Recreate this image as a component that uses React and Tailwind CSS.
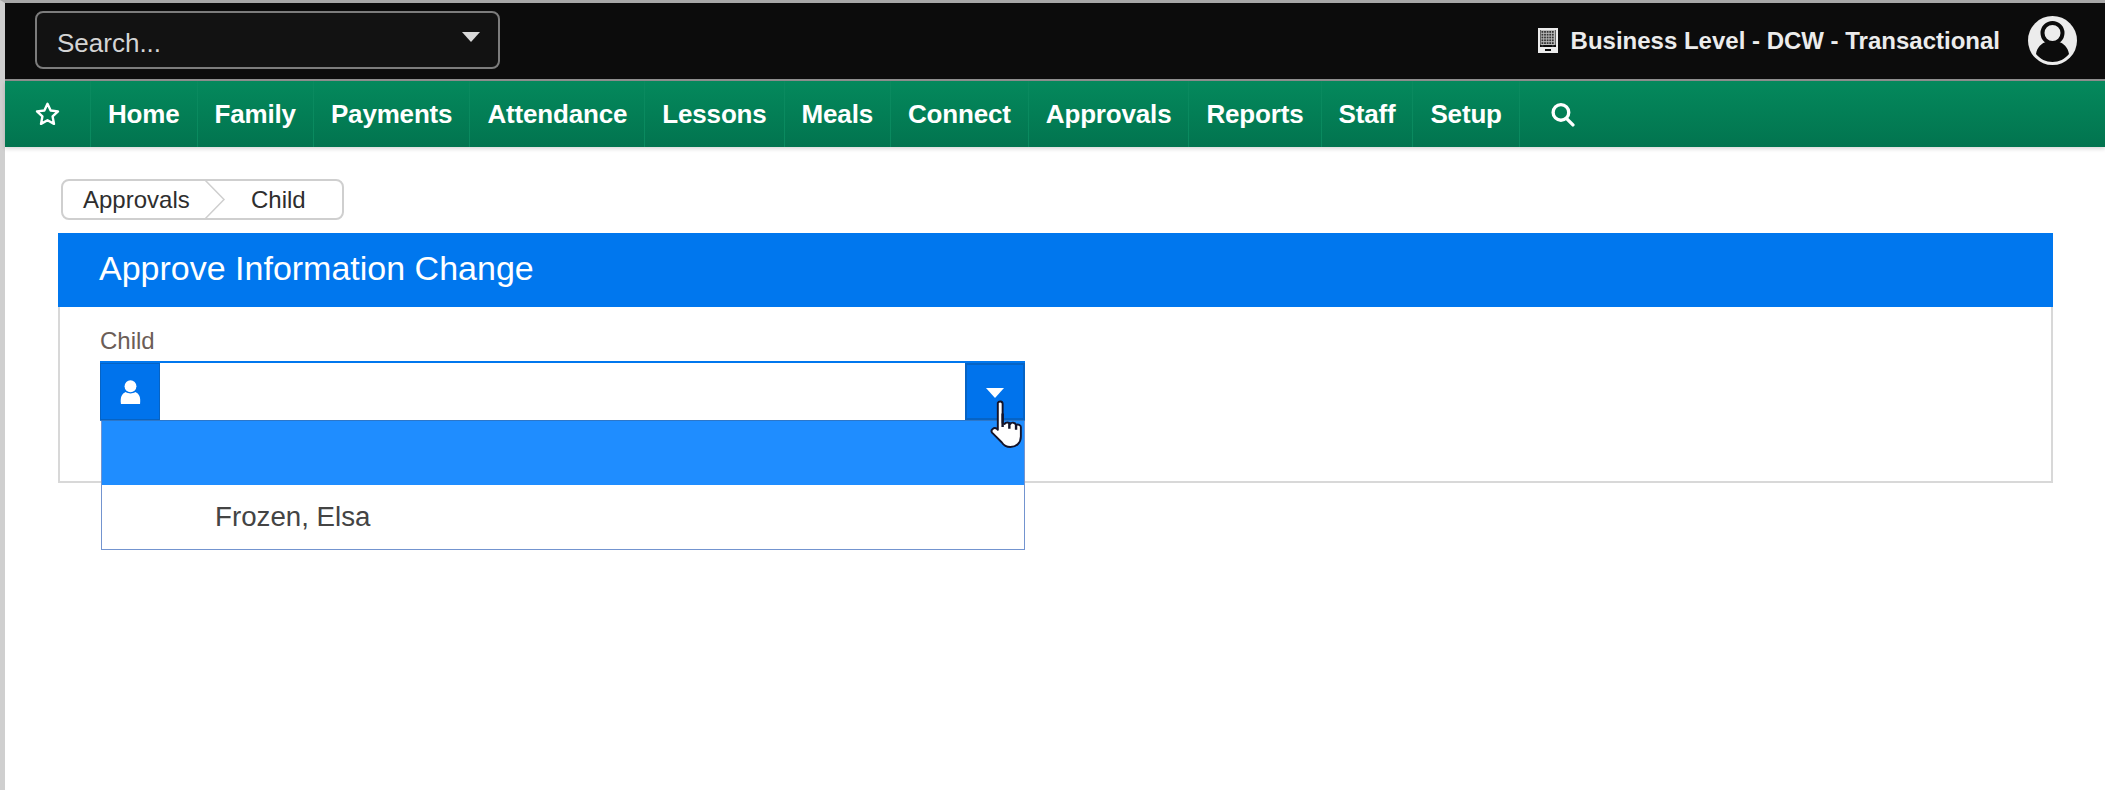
import React from "react";

const items = ["Home", "Family", "Payments", "Attendance", "Lessons", "Meals", "Connect", "Approvals", "Reports", "Staff", "Setup"];

function Caret({ className }) {
  return (
    <svg className={className} width="18" height="10" viewBox="0 0 18 10">
      <path d="M0 0H18L9 10Z" fill="currentColor" />
    </svg>
  );
}

function Building() {
  const cells = [];
  for (let r = 0; r < 6; r++) {
    for (let c = 0; c < 5; c++) {
      if (r === 5 && c > 0 && c < 4) continue;
      cells.push(<rect key={`${r}-${c}`} x={3.5 + c * 2.6} y={3 + r * 2.8} width="1.8" height="1.8" fill="#333" />);
    }
  }
  return (
    <svg width="20" height="25" viewBox="0 0 20 25" className="mr-[13px] -mt-[2px]">
      <rect x="1" y="1" width="18" height="23" fill="#0c0c0c" stroke="#ececec" strokeWidth="2" />
      <rect x="2.500" y="2" width="15" height="15" fill="#bdbdbd" />
      {cells}
      <path d="M2 19h16v5h-5v-3H7v3H2z" fill="#ececec" />
    </svg>
  );
}

export default function App() {
  return (
    <div className="min-h-[790px] bg-white font-['Liberation_Sans',Arial,sans-serif] border-l-[5px] border-l-[#cfcfcf] border-t-[3px] border-t-[#a8a8a8]">
      <header className="h-[76px] bg-[#0c0c0c] flex items-center justify-between pl-[30px] pr-[28px]">
        <div className="w-[465px] h-[58px] -mt-[2px] bg-[#121212] border-2 border-[#7c7c7c] rounded-lg flex items-center justify-between pl-[20px] pr-[18px]">
          <span className="text-[26px] text-[#d4d4d4] mt-[7px]">Search...</span>
          <Caret className="text-[#d9d9d9] -mt-[6px]" />
        </div>
        <div className="flex items-center">
          <Building />
          <span className="text-[24px] font-bold text-[#ececec] whitespace-nowrap">Business Level - DCW - Transactional</span>
          <svg className="ml-[28px] -mt-[2px]" width="49" height="49" viewBox="0 0 49 49">
            <circle cx="24.5" cy="24.5" r="24.5" fill="#ececec" />
            <circle cx="24.5" cy="17" r="10" fill="none" stroke="#0c0c0c" strokeWidth="4" />
            <path d="M8 38c1-7 6-11 10-12 4 3 9 3 13 0 4 1 9 5 10 12-4 5-10 8-16.500 8S12 43 8 38z" fill="#0c0c0c" />
          </svg>
        </div>
      </header>
      <div className="h-[2px] bg-[#8f8f8f]" />
      <nav className="h-[66px] flex bg-gradient-to-b from-[#04895c] to-[#02744f] shadow-[0_2px_4px_rgba(0,0,0,0.15)]">
        <div className="w-[86px] flex items-center pl-[29px] border-r border-r-[#0a8a5f]">
          <svg width="27" height="26" viewBox="0 0 24 24" fill="none" stroke="#fff" strokeWidth="2.2" strokeLinejoin="round">
            <path d="M12 2.500l2.900 6.300 6.800.800-5 4.700 1.300 6.800L12 17.700l-6 3.400 1.300-6.800-5-4.700 6.800-.800z" />
          </svg>
        </div>
        {items.map((t) => (
          <div key={t} className="flex items-center px-[17px] border-r border-r-[#0a8a5f] text-white font-bold text-[26px] whitespace-nowrap tracking-[-0.17px]">
            {t}
          </div>
        ))}
        <div className="flex items-center pl-[30px]">
          <svg width="25" height="25" viewBox="0 0 24 24" fill="none" stroke="#fff" strokeWidth="3.200" strokeLinecap="round">
            <circle cx="10.500" cy="10" r="7.500" />
            <path d="M16 16l6 6" />
          </svg>
        </div>
      </nav>
      <main className="pl-[53px] pr-[52px] pt-[32px]">
        <div className="ml-[3px] w-[283px] h-[41px] border-2 border-[#cfcfcf] rounded-lg flex items-center relative overflow-hidden text-[24px] text-[#2e2e2e]">
          <span className="pl-[20px] w-[146px]">Approvals</span>
          <svg className="absolute left-[141px] -top-[2px]" width="22" height="41" viewBox="0 0 22 41" fill="none" stroke="#cfcfcf" strokeWidth="1.500">
            <path d="M0 0l20 20.500L0 41" />
          </svg>
          <span className="pl-[42px]">Child</span>
        </div>
        <section className="mt-[13px] h-[250px] border-x-2 border-b-2 border-[#d8d8d8]">
          <div className="h-[74px] -mx-[2px] bg-[#0077ee] text-white text-[34px] flex items-center pl-[41px] pb-[4px]">
            Approve Information Change
          </div>
          <div className="pl-[40px]">
            <div className="h-[54px] flex items-end pb-[2px] text-[24px] text-[#6b5d57]">Child</div>
            <div className="relative w-[925px]">
              <div className="h-[60px] flex border-t-2 border-t-[#0077ee] border-b border-b-[#2d77c9]">
                <div className="w-[60px] bg-[#0073ec] border border-[#0663c4] flex items-center justify-center">
                  <svg width="21" height="24" viewBox="0 0 22 25" fill="#fff" className="mt-[1px]">
                    <circle cx="11" cy="6.500" r="6.200" />
                    <path d="M1 25c-1-7 1-11 5-12.500 3 2 7 2 10 0 4 1.500 6 5.500 5 12.500z" />
                  </svg>
                </div>
                <div className="flex-1" />
                <div className="w-[60px] bg-[#0073ec] border-2 border-[#0663c4] flex items-center justify-center">
                  <Caret className="text-white mt-[3px]" />
                </div>
              </div>
              <div className="ml-[1px] h-[129px] border-x border-b border-[#7394cf] bg-white">
                <div className="h-[64px] bg-[#1f8dff]" />
                <div className="h-[64px] flex items-center pl-[113px] text-[27.700px] text-[#444444]">Frozen, Elsa</div>
              </div>
              <svg className="absolute left-[888px] top-[39px]" width="35" height="48" viewBox="0 0 36 50">
                <path
                  d="M4 3c1-2 5-2 5 1v20l2 1c1-2 5-2 6 0 1-2 5-2 6 1 2-1 5 0 5 2v10c0 7-5 11-11 11-4 0-7-2-9-5L-2 34c-2-3 2-6 5-4l1 1V3z"
                  transform="translate(6 0)"
                  fill="#fff"
                  stroke="#14142a"
                  strokeWidth="2"
                  strokeLinejoin="round"
                />
                <path d="M15 14v14M22 24v6M29 25v6" stroke="#14142a" strokeWidth="2.500" fill="none" />
              </svg>
            </div>
          </div>
        </section>
      </main>
    </div>
  );
}
